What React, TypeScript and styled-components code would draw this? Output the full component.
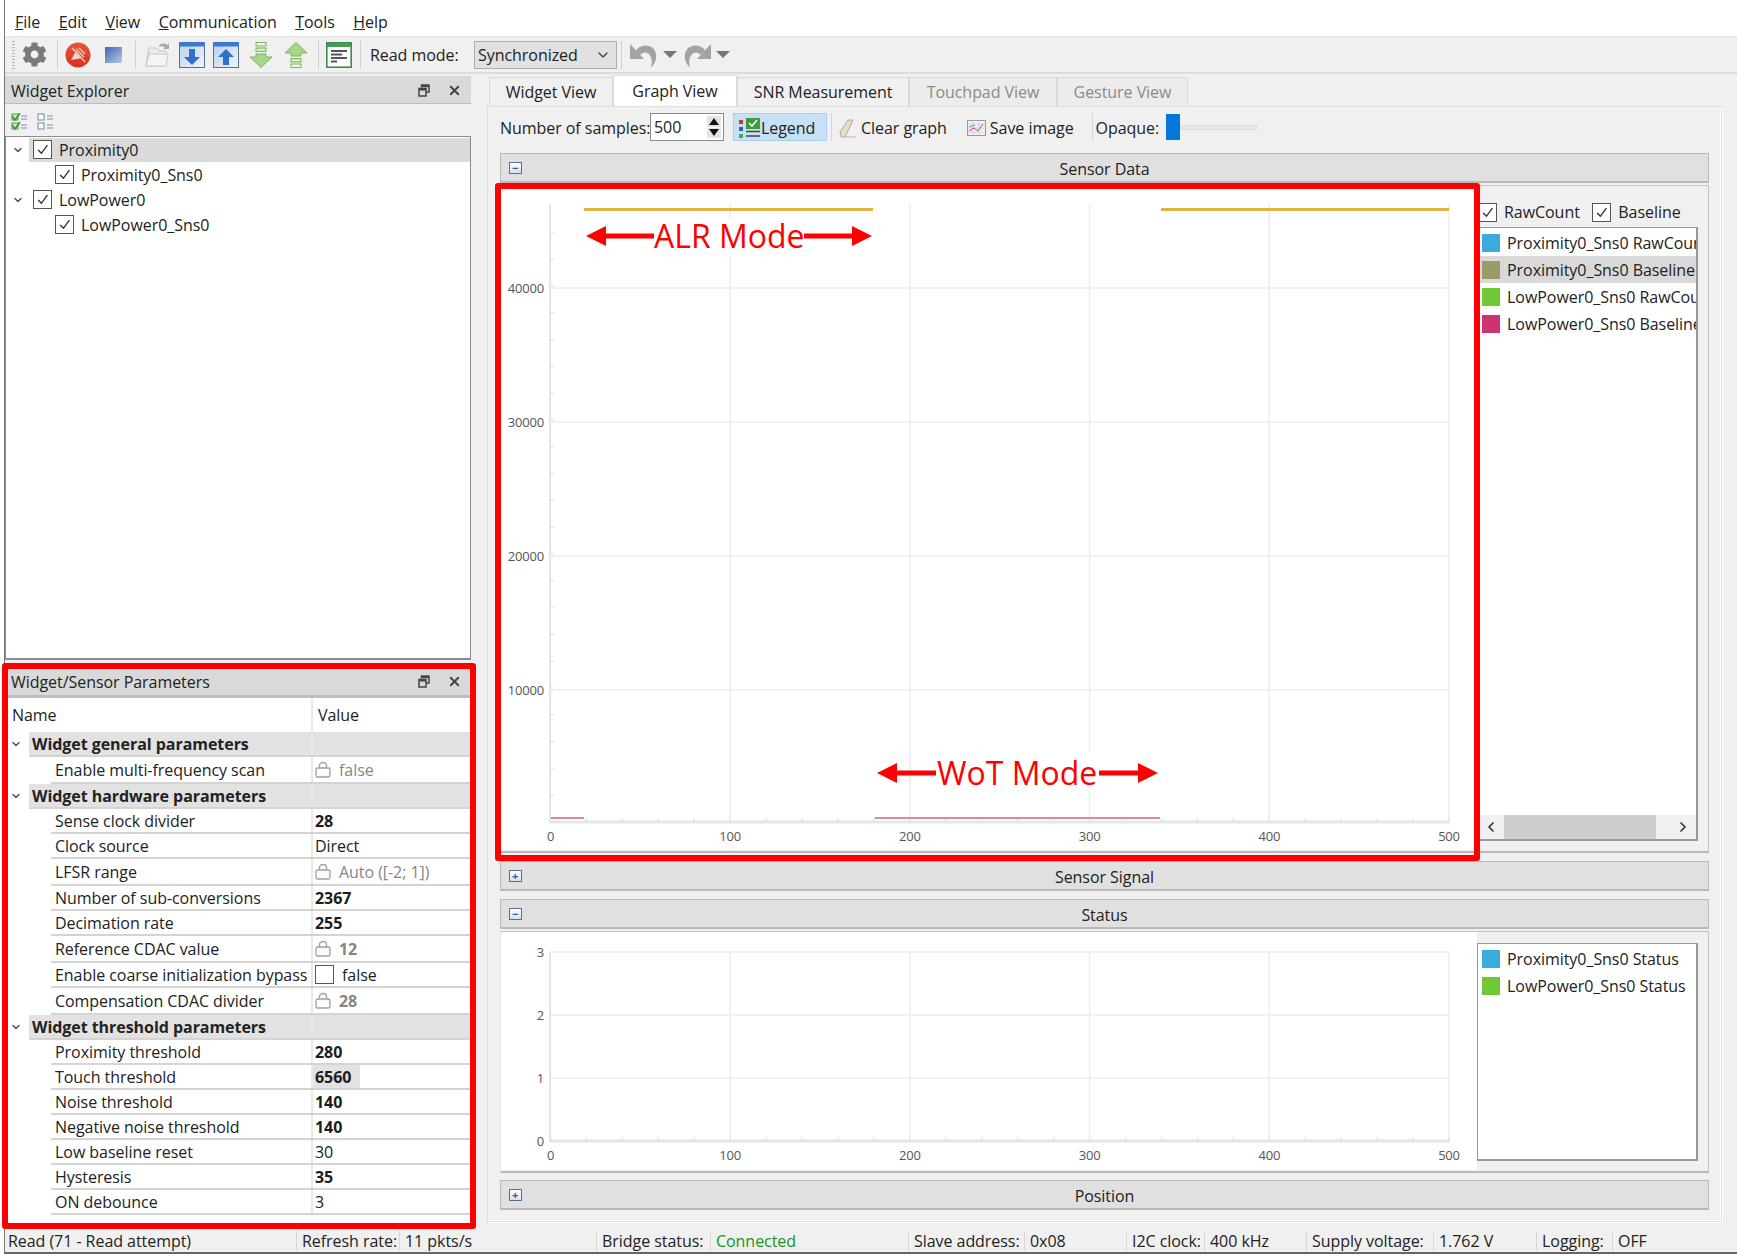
import React from 'react';
import styled, { createGlobalStyle } from 'styled-components';
import { ChevronDown, ChevronLeft, ChevronRight, X } from 'lucide-react';
import { FaCog } from 'react-icons/fa';

const Global = createGlobalStyle`
  html, body { margin: 0; padding: 0; background: #fff; }
  body { font-family: "Open Sans", "Noto Sans", "Liberation Sans", sans-serif; font-size: 16px; letter-spacing: -0.05px; color: #222; }
  * { box-sizing: border-box; }
`;

const Page = styled.div`
  position: relative;
  width: 1737px;
  height: 1256px;
  padding-left: 4px;
  overflow: hidden;
  background: #fff;
`;
const Win = styled.div`
  height: 1254px;
  border-left: 1px solid #777;
  border-bottom: 2px solid #666;
  background: #f0f0f0;
  display: flex;
  flex-direction: column;
`;
const MenuBar = styled.div`
  height: 36px;
  background: #fff;
  display: flex;
  align-items: flex-end;
  gap: 18.5px;
  padding: 0 0 3px 10px;
  line-height: 22px;
`;
const MenuItem = styled.span`
  &::first-letter { text-decoration: underline; }
`;
const ToolBar = styled.div`
  height: 38px;
  border-top: 1px solid #e6e6e6;
  border-bottom: 2px solid #dcdcdc;
  display: flex;
  align-items: center;
`;
const Slot = styled.div<{ $w: number; $ml: number }>`
  width: ${p => p.$w}px;
  margin-left: ${p => p.$ml}px;
  height: 26px;
  flex: none;
  display: flex;
  align-items: center;
  justify-content: center;
  svg { display: block; }
`;
const ToolSep = styled.div<{ $ml: number }>`
  width: 1px;
  height: 28px;
  background: #cfcfcf;
  flex: none;
  margin-left: ${p => p.$ml}px;
`;
const Grip = styled.div`
  width: 3px;
  height: 28px;
  margin-left: 7px;
  flex: none;
  background: repeating-linear-gradient(#b5b5b5 0 1px, transparent 1px 3px);
`;
const ToolLabel = styled.span`
  margin-left: 9px;
  width: 104px;
  flex: none;
`;
const Combo = styled.div`
  width: 143px;
  height: 28px;
  flex: none;
  background: #e1e1e1;
  border: 1px solid #adadad;
  display: flex;
  align-items: center;
  justify-content: space-between;
  padding: 0 5px 0 3px;
`;
const Body = styled.div`
  flex: 1;
  display: flex;
  min-height: 0;
`;
const LeftCol = styled.div`
  width: 466px;
  flex: none;
  padding-top: 2px;
  display: flex;
  flex-direction: column;
`;
const DockTitle = styled.div<{ $shift: number }>`
  height: 28px;
  background: #d9d9d9;
  border-bottom: 1px solid #bdbdbd;
  display: flex;
  align-items: center;
  padding: ${p => p.$shift}px 2px 0 6px;
  flex: none;
`;
const DockName = styled.span`
  flex: 1;
`;
const DockBtn = styled.span`
  width: 30px;
  display: flex;
  justify-content: center;
  align-items: center;
`;
const ExplorerTools = styled.div`
  height: 32px;
  display: flex;
  align-items: center;
  gap: 8px;
  padding: 2px 0 0 6px;
  flex: none;
`;
const TreeBox = styled.div`
  height: 524px;
  flex: none;
  border: 1px solid #8c8c8c;
  border-bottom-width: 2px;
  background: #fff;
`;
const TreeRow = styled.div`
  height: 25px;
  display: flex;
  align-items: center;
`;
const TreeChevron = styled.span`
  width: 23px;
  flex: none;
  display: flex;
  justify-content: center;
  color: #555;
`;
const TreeBody = styled.div<{ $depth: number; $sel?: boolean }>`
  flex: 1;
  height: 24px;
  display: flex;
  align-items: center;
  gap: 7px;
  padding-left: ${p => (p.$depth ? 26 : 4)}px;
  background: ${p => (p.$sel ? '#dadada' : 'transparent')};
`;
const Box = styled.span<{ $size?: number }>`
  width: ${p => p.$size ?? 19}px;
  height: ${p => p.$size ?? 19}px;
  flex: none;
  border: 1.5px solid #555;
  background: #fff;
  display: inline-flex;
  align-items: center;
  justify-content: center;
`;
const ParamTable = styled.div`
  margin-top: 8px;
  display: flex;
  flex-direction: column;
`;
const ParamBody = styled.div`
  background: #fff;
  height: 532px;
`;
const ParamHead = styled.div`
  height: 36px;
  border-top: 2px solid #bdbdbd;
  display: flex;
  align-items: center;
  > span:first-child { width: 306px; padding-left: 7px; }
  > span:last-child { padding-left: 5px; border-left: 2px solid #e8e8e8; height: 100%; display: flex; align-items: center; }
`;
const ParamLine = styled.div<{ $h: number; $group?: boolean }>`
  height: ${p => p.$h}px;
  display: flex;
  padding-left: ${p => (p.$group ? 24 : 46)}px;
  position: relative;
`;
const ParamInner = styled.div<{ $group?: boolean }>`
  flex: 1;
  display: flex;
  margin-right: 1px;
  border-bottom: 2px solid #d4d4d4;
  background: ${p => (p.$group ? '#e2e2e2' : '#fff')};
`;
const GroupChev = styled.span`
  position: absolute;
  left: 5px;
  top: 6px;
  color: #555;
  display: flex;
`;
const ParamName = styled.div<{ $group?: boolean }>`
  width: ${p => (p.$group ? 282 : 260)}px;
  flex: none;
  padding-left: ${p => (p.$group ? 3 : 4)}px;
  font-weight: ${p => (p.$group ? 700 : 400)};
  display: flex;
  align-items: center;
  white-space: nowrap;
`;
const ParamVal = styled.div`
  flex: 1;
  border-left: 2px solid #e8e8e8;
  display: flex;
  align-items: center;
`;
const ValText = styled.span<{ $bold?: boolean; $dim?: boolean; $hi?: boolean }>`
  height: 100%;
  display: inline-flex;
  align-items: center;
  gap: 8px;
  padding: 0 ${p => (p.$hi ? 2 : 4)}px 0 2px;
  min-width: ${p => (p.$hi ? 47 : 0)}px;
  font-weight: ${p => (p.$bold ? 700 : 400)};
  color: ${p => (p.$dim ? '#858585' : '#1c1c1c')};
  background: ${p => (p.$hi ? '#e2e2e2' : 'transparent')};
  svg { flex: none; }
`;
const MainCol = styled.div`
  width: 1235px;
  margin-left: 16px;
  flex: none;
  display: flex;
  flex-direction: column;
`;
const Tabs = styled.div`
  height: 32px;
  display: flex;
  align-items: flex-end;
  padding-left: 2px;
  flex: none;
`;
const Tab = styled.div<{ $w: number; $active?: boolean; $off?: boolean }>`
  width: ${p => p.$w}px;
  height: ${p => (p.$active ? 31 : 29)}px;
  background: ${p => (p.$active ? '#fff' : p.$off ? '#ececec' : '#f0f0f0')};
  border: 1px solid #dadada;
  border-bottom: none;
  display: flex;
  align-items: center;
  justify-content: center;
  color: ${p => (p.$off ? '#8a8a8a' : '#222')};
`;
const Pane = styled.div`
  height: 1116px;
  flex: none;
  background: #f0f0f0;
  border: 1px solid #dedede;
  box-shadow: inset -1px -1px 0 #fff, 1px 1px 0 #fff;
  padding: 6px 12px 0 12px;
  display: flex;
  flex-direction: column;
`;
const PaneTools = styled.div`
  height: 28px;
  display: flex;
  align-items: center;
  flex: none;
`;
const SamplesLabel = styled.span`
  width: 150px;
  flex: none;
  white-space: nowrap;
  padding-top: 1px;
`;
const Spin = styled.div`
  width: 74px;
  height: 28px;
  flex: none;
  border: 1px solid #8a8a8a;
  background: #fff;
  display: flex;
  align-items: center;
  justify-content: space-between;
  padding: 2px 2px 2px 3px;
`;
const SpinBtns = styled.div`
  width: 14px;
  height: 100%;
  display: flex;
  flex-direction: column;
  gap: 1px;
`;
const SpinBtn = styled.span`
  flex: 1;
  background: #e4e4e4;
  display: flex;
  align-items: center;
  justify-content: center;
`;
const LegendBtn = styled.div`
  width: 94px;
  height: 28px;
  margin-left: 9px;
  flex: none;
  background: #c6e0f6;
  border: 1px solid #a6cff2;
  display: flex;
  align-items: center;
  padding: 2px 0 0 5px;
  gap: 0;
`;
const PaneSep = styled.div<{ $ml: number }>`
  width: 1px;
  height: 28px;
  background: #d6d6d6;
  margin-left: ${p => p.$ml}px;
  flex: none;
`;
const PaneAction = styled.span<{ $ml: number }>`
  margin-left: ${p => p.$ml}px;
  display: flex;
  align-items: center;
  gap: 4px;
  flex: none;
  white-space: nowrap;
  padding-top: 1px;
`;
const Handle = styled.div`
  width: 14px;
  height: 26px;
  margin-left: 7px;
  background: #0078d7;
  flex: none;
`;
const Track = styled.div`
  width: 77px;
  height: 5px;
  background: #e3e7e5;
  border: 1px solid #dcdcdc;
  flex: none;
`;
const GroupHead = styled.div<{ $mt: number }>`
  height: 30px;
  margin-top: ${p => p.$mt}px;
  flex: none;
  background: #e0e0e0;
  border: 1px solid #b9b9b9;
  border-bottom-width: 2px;
  display: grid;
  grid-template-columns: 30px 1fr 30px;
  align-items: center;
  justify-items: center;
  > span:last-child { padding-top: 2px; }
`;
const Expander = styled.span`
  width: 13px;
  height: 12px;
  border: 1px solid #54708f;
  background: linear-gradient(#fff, #d6dfea);
  color: #1f5fa8;
  font-size: 11px;
  line-height: 9px;
  font-weight: 700;
  text-align: center;
  margin-left: -2px;
`;
const GroupPanel = styled.div<{ $h: number }>`
  height: ${p => p.$h}px;
  margin-top: 2px;
  flex: none;
  display: flex;
  border: 1px solid #c4c4c4;
  border-left-color: #e4e4e4;
  border-bottom: 2px solid #b8b8b8;
  background: #f0f0f0;
`;
const ChartSvg = styled.svg`
  display: block;
  flex: none;
  background: #fff;
  font-family: "Open Sans", "Noto Sans", sans-serif;
  letter-spacing: -0.2px;
`;
const LegendCol = styled.div<{ $top: number }>`
  flex: 1;
  min-width: 0;
  display: flex;
  flex-direction: column;
  padding: ${p => p.$top}px 10px 10px 0;
`;
const LegendChecks = styled.div`
  height: 28px;
  display: flex;
  align-items: center;
  flex: none;
  padding: 0 0 2px 1px;
`;
const LegendCheckText = styled.span<{ $w: number }>`
  width: ${p => p.$w}px;
  padding-left: 7px;
`;
const LegendList = styled.div`
  flex: 1;
  min-height: 0;
  border: 1px solid #999;
  border-bottom-width: 2px;
  border-right-width: 2px;
  background: #fff;
  display: flex;
  flex-direction: column;
  overflow: hidden;
`;
const LegendRows = styled.div`
  flex: 1;
  padding-top: 1px;
`;
const LegendRow = styled.div<{ $sel?: boolean }>`
  height: 27px;
  display: flex;
  align-items: center;
  gap: 7px;
  padding-left: 4px;
  white-space: nowrap;
  overflow: hidden;
  background: ${p => (p.$sel ? '#d9d9d9' : 'transparent')};
`;
const Swatch = styled.span<{ $c: string }>`
  width: 18px;
  height: 18px;
  flex: none;
  background: ${p => p.$c};
`;
const HScroll = styled.div`
  height: 24px;
  flex: none;
  background: #f0f0f0;
  display: flex;
  align-items: center;
  color: #333;
`;
const HArrow = styled.span`
  width: 26px;
  flex: none;
  display: flex;
  justify-content: center;
`;
const HThumb = styled.div`
  width: 152px;
  height: 100%;
  background: #cdcdcd;
  flex: none;
`;
const HFill = styled.div`
  flex: 1;
`;
const StatusBar = styled.div`
  height: 24px;
  flex: none;
  display: flex;
  align-items: center;
  font-size: 16px;
  padding-top: 1px;
`;
const StatusCell = styled.div<{ $w: number; $green?: boolean; $first?: boolean }>`
  width: ${p => p.$w}px;
  height: 20px;
  flex: none;
  border-left: ${p => (p.$first ? 'none' : '1px solid #d6d6d6')};
  padding-left: ${p => (p.$first ? 3 : 5)}px;
  display: flex;
  align-items: center;
  white-space: nowrap;
  color: ${p => (p.$green ? '#17941b' : '#222')};
`;
const RedFrame = styled.div<{ $x: number; $y: number; $w: number; $h: number }>`
  position: absolute;
  left: ${p => p.$x}px;
  top: ${p => p.$y}px;
  width: ${p => p.$w}px;
  height: ${p => p.$h}px;
  border: 6px solid #ff0000;
  border-radius: 3px;
  pointer-events: none;
`;

const Tick = () => (
  <svg width="13" height="13" viewBox="0 0 12 12" fill="none" stroke="#333" strokeWidth="1.3"><path d="M2 6.5 L5 9.5 L10.5 2" /></svg>
);
const Check = () => <Box><Tick /></Box>;
const Lock = () => (
  <svg width="16" height="17" viewBox="0 0 16 17" fill="#fbfbfb" stroke="#a0a0a0" strokeWidth="1.3">
    <path d="M4.5 7 V4.5 C4.5 0.5 11.5 0.5 11.5 4.5 V7" fill="none" />
    <rect x="1" y="7" width="14" height="9" rx="1.5" />
  </svg>
);
const Restore = () => (
  <svg width="12" height="13" viewBox="0 0 12 13" fill="none" stroke="#444" strokeWidth="1.5">
    <path d="M3.5 3.5 V1 H11 V8 H8" />
    <path d="M3.5 2.2 H11" strokeWidth="2" />
    <rect x="1" y="4.5" width="7" height="7.5" />
    <path d="M1 5.5 H8" strokeWidth="2" />
  </svg>
);
const Close = () => <X size={15} strokeWidth={3} color="#444" />;

const Stop = () => (
  <svg width="26" height="26" viewBox="0 0 26 26">
    <defs><linearGradient id="st" x1="0" y1="0" x2="0" y2="1"><stop offset="0" stopColor="#e8553c" /><stop offset="1" stopColor="#d7301c" /></linearGradient></defs>
    <circle cx="13" cy="13" r="12.5" fill="url(#st)" />
    <path d="M6 18 L11 9 L17 16 Z" fill="#f9d9d0" />
    <path d="M11 7 L19 15 M14 6 L20 12 M7 6 L20 20" stroke="#f6c4b8" strokeWidth="1.5" />
  </svg>
);
const Square = () => (
  <svg width="17" height="16" viewBox="0 0 17 16">
    <defs><linearGradient id="sq" x1="0" y1="0" x2="1" y2="1"><stop offset="0" stopColor="#3d66b4" /><stop offset="1" stopColor="#b7c9e8" /></linearGradient></defs>
    <rect width="17" height="16" fill="url(#sq)" />
  </svg>
);
const Folder = () => (
  <svg width="26" height="26" viewBox="0 0 26 26">
    <path d="M15 4 C17 1 21 1 23 3 L25 1 V7 H19 L21 5 C19 4 17 4 15 5 Z" fill="#a9a9a9" />
    <path d="M5 6 H13 L15 9 H22 V24 H2 Z" fill="#ececec" stroke="#c4c4c4" />
    <path d="M5 12 H24 L22 24 H2 Z" fill="#f4f4f4" stroke="#c9c9c9" />
  </svg>
);
const BlueWin = ({ up }: { up?: boolean }) => (
  <svg width="26" height="26" viewBox="0 0 26 26">
    <defs><linearGradient id={up ? 'bu' : 'bd'} x1="0" y1="0" x2="1" y2="1"><stop offset="0" stopColor="#b6cdee" /><stop offset="1" stopColor="#f1f5fb" /></linearGradient></defs>
    <rect x="0.5" y="0.5" width="25" height="25" fill={`url(#${up ? 'bu' : 'bd'})`} stroke="#5c6f88" />
    <rect x="0" y="0" width="26" height="4.5" fill="#3a7bd0" />
    {up
      ? <path d="M13 7 L21 15 H16 V23 H10 V15 H5 Z" fill="#2f70c8" />
      : <path d="M13 23 L21 15 H16 V7 H10 V15 H5 Z" fill="#2f70c8" />}
  </svg>
);
const GreenArrow = ({ up }: { up?: boolean }) => (
  <svg width="24" height="26" viewBox="0 0 24 26">
    <g transform={up ? 'translate(0 26) scale(1 -1)' : undefined} fill="#a5d886" stroke="#7ab65a" strokeWidth="1">
      <rect x="7" y="0.5" width="10" height="3.5" fill="#eef8e6" />
      <rect x="7" y="6" width="10" height="3.5" fill="#d3edc0" />
      <path d="M7 12 H17 V15 H23 L12 25.5 L1 15 H7 Z" />
    </g>
  </svg>
);
const DocIcon = () => (
  <svg width="26" height="26" viewBox="0 0 26 26">
    <rect x="0.8" y="0.8" width="24.4" height="24.4" fill="#fff" stroke="#3d8a4d" strokeWidth="1.6" />
    <rect x="1" y="1" width="24" height="4" fill="#4a9a5c" />
    <path d="M5 9 H21 M5 12.5 H16 M5 16 H21 M5 19.5 H11" stroke="#555" strokeWidth="1.8" />
  </svg>
);
const Undo = ({ flip }: { flip?: boolean }) => (
  <svg width="28" height="26" viewBox="0 0 28 26" fill="#a3a3a3">
    <g transform={flip ? 'translate(28 0) scale(-1 1)' : undefined}>
      <path d="M1 2 V17 H15 Z" />
      <path d="M7 8 C13 1 25 2 27 12 C28 18 25 23 22 25.5 C24 18 22 11 16 10.5 C14 10.5 12 12 11 13 Z" />
    </g>
  </svg>
);
const DropTri = () => (
  <svg width="14" height="7" viewBox="0 0 14 7"><path d="M0 0 H14 L7 7 Z" fill="#777" /></svg>
);
const CheckAll = ({ on }: { on?: boolean }) => (
  <svg width="18" height="17" viewBox="0 0 18 17" fill="none">
    {[0, 9].map(y => (
      <g key={y} transform={`translate(0 ${y})`}>
        <rect x="1" y="1" width="6" height="6" fill={on ? '#cfe8c0' : '#fff'} stroke={on ? '#5c9b45' : '#6d88a8'} />
        {on && <path d="M1 3 L4 7 L9 0" stroke="#2c9a2c" strokeWidth="1.6" />}
        <path d="M10 3 H16 M10 6 H16" stroke="#7a8ea8" />
      </g>
    ))}
  </svg>
);
const LegendIcon = () => (
  <svg width="22" height="22" viewBox="0 0 22 22">
    <rect x="0" y="3" width="4" height="4" fill="#d8342c" />
    <rect x="0" y="10" width="4" height="4" fill="#2c62c4" />
    <rect x="0" y="17" width="4" height="4" fill="#3bb23b" />
    <rect x="7" y="1" width="14" height="11" fill="#3f9a3f" />
    <path d="M10 6 L13 9 L18 3" stroke="#fff" strokeWidth="1.6" fill="none" />
    <path d="M7 14.5 H21 M7 19 H21" stroke="#444" strokeWidth="1.5" />
  </svg>
);
const Eraser = () => (
  <svg width="18" height="20" viewBox="0 0 18 20">
    <path d="M1 14 L9 2 H14 L6 19 H2 Z" fill="#e6dccb" stroke="#b5a88e" />
    <path d="M6 19 H17" stroke="#b8b8b8" />
  </svg>
);
const SaveImg = () => (
  <svg width="19" height="18" viewBox="0 0 19 18">
    <rect x="0.5" y="1.5" width="18" height="15" fill="#f1f1f1" stroke="#9b9b9b" />
    <path d="M1 5 H18 M1 9 H18 M1 13 H18 M6 2 V16 M12 2 V16" stroke="#cfd7df" />
    <path d="M2 12 L7 9 L11 12 L16 5" stroke="#c4468c" fill="none" />
    <path d="M2 8 L8 6" stroke="#4c9ad0" fill="none" />
  </svg>
);
const SpinTri = ({ up }: { up?: boolean }) => (
  <svg width="10" height="7" viewBox="0 0 10 7"><path d={up ? 'M0 7 H10 L5 0 Z' : 'M0 0 H10 L5 7 Z'} fill="#111" /></svg>
);

const XT = [0, 100, 200, 300, 400, 500];
const xOf = (v: number) => 550.5 + v * 1.797;

const XAxis = ({ top, axis, label }: { top: number; axis: number; label: number }) => (
  <g>
    {XT.map(v => (
      <line key={v} x1={xOf(v)} x2={xOf(v)} y1={top} y2={axis} stroke="#ececec" strokeWidth="1.5" />
    ))}
    <line x1={549} x2={1450} y1={axis} y2={axis} stroke="#e6e6e6" strokeWidth="3" />
    <line x1={550} x2={550} y1={top} y2={axis} stroke="#e6e6e6" strokeWidth="2" />
    {Array.from({ length: 26 }, (_, i) => (
      <line key={i} x1={xOf(i * 20)} x2={xOf(i * 20)} y1={axis - 4} y2={axis} stroke="#dedede" />
    ))}
    {XT.map(v => (
      <text key={v} x={xOf(v)} y={label} textAnchor="middle" fontSize="13" fill="#555">{v}</text>
    ))}
  </g>
);

const Arrow = ({ from, to, y }: { from: number; to: number; y: number }) => {
  const dir = to > from ? 1 : -1;
  return (
    <g fill="#ff0000" stroke="none">
      <rect x={Math.min(from, to - dir * 18)} y={y - 2.5} width={Math.abs(to - dir * 18 - from)} height="5" />
      <polygon points={`${to},${y} ${to - dir * 20},${y - 10} ${to - dir * 20},${y + 10}`} />
    </g>
  );
};

const SensorChart = () => (
  <ChartSvg width={976} height={664} viewBox="501 186 976 664">
    {[288, 422, 556, 690].map(y => (
      <line key={y} x1={550} x2={1449} y1={y} y2={y} stroke="#ececec" strokeWidth="1.5" />
    ))}
    <XAxis top={204} axis={822} label={841} />
    {[288, 422, 556, 690].map((y, i) => (
      <text key={y} x={544} y={y + 5} textAnchor="end" fontSize="13" fill="#555">{40000 - i * 10000}</text>
    ))}
    {Array.from({ length: 23 }, (_, i) => (
      <line key={i} x1={550} x2={554} y1={822 - i * 26.8} y2={822 - i * 26.8} stroke="#dedede" />
    ))}
    <line x1={584} x2={873} y1={209.5} y2={209.5} stroke="#e3b341" strokeWidth="3" />
    <line x1={1161} x2={1449} y1={209.5} y2={209.5} stroke="#e3b341" strokeWidth="3" />
    <line x1={551} x2={584} y1={818} y2={818} stroke="#d78a9f" strokeWidth="2" />
    <line x1={875} x2={1160} y1={818} y2={818} stroke="#d78a9f" strokeWidth="2" />
    <rect x={654} y={218} width={150} height={38} fill="#fff" />
    <rect x={936} y={752} width={164} height={38} fill="#fff" />
    <Arrow from={654} to={586} y={236} />
    <Arrow from={804} to={872} y={236} />
    <text x={654} y={248} fontSize="32" fill="#ff0000" letterSpacing="0">ALR Mode</text>
    <Arrow from={936} to={877} y={773} />
    <Arrow from={1099} to={1158} y={773} />
    <text x={937} y={785} fontSize="32" fill="#ff0000" letterSpacing="0">WoT Mode</text>
  </ChartSvg>
);

const StatusChart = () => (
  <ChartSvg width={976} height={238} viewBox="501 932 976 238">
    {[952, 1015, 1078].map(y => (
      <line key={y} x1={550} x2={1449} y1={y} y2={y} stroke="#ececec" strokeWidth="1.5" />
    ))}
    <XAxis top={952} axis={1141} label={1160} />
    {[952, 1015, 1078, 1141].map((y, i) => (
      <text key={y} x={544} y={y + 5} textAnchor="end" fontSize="13" fill="#555">{3 - i}</text>
    ))}
  </ChartSvg>
);

type P = { n: string; v?: React.ReactNode; group?: boolean; h?: number; bold?: boolean; lock?: boolean; hi?: boolean; box?: boolean };
const params: P[] = [
  { n: 'Widget general parameters', group: true },
  { n: 'Enable multi-frequency scan', v: 'false', lock: true, h: 27 },
  { n: 'Widget hardware parameters', group: true },
  { n: 'Sense clock divider', v: '28', bold: true },
  { n: 'Clock source', v: 'Direct' },
  { n: 'LFSR range', v: 'Auto ([-2; 1])', lock: true, h: 27 },
  { n: 'Number of sub-conversions', v: '2367', bold: true },
  { n: 'Decimation rate', v: '255', bold: true },
  { n: 'Reference CDAC value', v: '12', bold: true, lock: true, h: 27 },
  { n: 'Enable coarse initialization bypass', v: 'false', box: true },
  { n: 'Compensation CDAC divider', v: '28', bold: true, lock: true, h: 27 },
  { n: 'Widget threshold parameters', group: true },
  { n: 'Proximity threshold', v: '280', bold: true },
  { n: 'Touch threshold', v: '6560', bold: true, hi: true },
  { n: 'Noise threshold', v: '140', bold: true },
  { n: 'Negative noise threshold', v: '140', bold: true },
  { n: 'Low baseline reset', v: '30' },
  { n: 'Hysteresis', v: '35', bold: true },
  { n: 'ON debounce', v: '3' },
];

const statusCells: { t: string; w: number; green?: boolean }[] = [
  { t: 'Read (71 - Read attempt)', w: 291 },
  { t: 'Refresh rate:', w: 103 },
  { t: '11 pkts/s', w: 197 },
  { t: 'Bridge status:', w: 114 },
  { t: 'Connected', w: 198, green: true },
  { t: 'Slave address:', w: 116 },
  { t: '0x08', w: 102 },
  { t: 'I2C clock:', w: 78 },
  { t: '400 kHz', w: 102 },
  { t: 'Supply voltage:', w: 127 },
  { t: '1.762 V', w: 103 },
  { t: 'Logging:', w: 76 },
  { t: 'OFF', w: 101 },
];

export default function App() {
  return (
    <Page>
      <Global />
      <Win>
        <MenuBar>
          {['File', 'Edit', 'View', 'Communication', 'Tools', 'Help'].map(m => <MenuItem key={m}>{m}</MenuItem>)}
        </MenuBar>
        <ToolBar>
          <Grip />
          <Slot $w={26} $ml={6}><FaCog size={25} color="#7b7b7b" /></Slot>
          <ToolSep $ml={10} />
          <Slot $w={26} $ml={7}><Stop /></Slot>
          <Slot $w={17} $ml={14}><Square /></Slot>
          <ToolSep $ml={13} />
          <Slot $w={26} $ml={8}><Folder /></Slot>
          <Slot $w={26} $ml={9}><BlueWin /></Slot>
          <Slot $w={26} $ml={8}><BlueWin up /></Slot>
          <Slot $w={24} $ml={10}><GreenArrow /></Slot>
          <Slot $w={24} $ml={11}><GreenArrow up /></Slot>
          <ToolSep $ml={10} />
          <Slot $w={26} $ml={7}><DocIcon /></Slot>
          <ToolSep $ml={8} />
          <ToolLabel>Read mode:</ToolLabel>
          <Combo>Synchronized<ChevronDown size={16} color="#444" /></Combo>
          <ToolSep $ml={4} />
          <Slot $w={28} $ml={7}><Undo /></Slot>
          <Slot $w={14} $ml={6}><DropTri /></Slot>
          <Slot $w={28} $ml={7}><Undo flip /></Slot>
          <Slot $w={14} $ml={4}><DropTri /></Slot>
        </ToolBar>
        <Body>
          <LeftCol>
            <DockTitle $shift={2}>
              <DockName>Widget Explorer</DockName>
              <DockBtn><Restore /></DockBtn>
              <DockBtn><Close /></DockBtn>
            </DockTitle>
            <ExplorerTools><CheckAll on /><CheckAll /></ExplorerTools>
            <TreeBox>
              <TreeRow>
                <TreeChevron><ChevronDown size={12} strokeWidth={3} /></TreeChevron>
                <TreeBody $depth={0} $sel><Check />Proximity0</TreeBody>
              </TreeRow>
              <TreeRow>
                <TreeChevron />
                <TreeBody $depth={1}><Check />Proximity0_Sns0</TreeBody>
              </TreeRow>
              <TreeRow>
                <TreeChevron><ChevronDown size={12} strokeWidth={3} /></TreeChevron>
                <TreeBody $depth={0}><Check />LowPower0</TreeBody>
              </TreeRow>
              <TreeRow>
                <TreeChevron />
                <TreeBody $depth={1}><Check />LowPower0_Sns0</TreeBody>
              </TreeRow>
            </TreeBox>
            <ParamTable>
              <DockTitle $shift={0}>
                <DockName>Widget/Sensor Parameters</DockName>
                <DockBtn><Restore /></DockBtn>
                <DockBtn><Close /></DockBtn>
              </DockTitle>
              <ParamBody>
                <ParamHead><span>Name</span><span>Value</span></ParamHead>
                {params.map(p => (
                  <ParamLine key={p.n} $h={p.h ?? 25} $group={p.group}>
                    {p.group && <GroupChev><ChevronDown size={12} strokeWidth={3} /></GroupChev>}
                    <ParamInner $group={p.group}>
                      <ParamName $group={p.group}>{p.n}</ParamName>
                      <ParamVal>
                        {p.v && (
                          <ValText $bold={p.bold} $dim={p.lock} $hi={p.hi}>
                            {p.lock && <Lock />}
                            {p.box && <Box $size={19} />}
                            {p.v}
                          </ValText>
                        )}
                      </ParamVal>
                    </ParamInner>
                  </ParamLine>
                ))}
              </ParamBody>
            </ParamTable>
          </LeftCol>
          <MainCol>
            <Tabs>
              <Tab $w={124}>Widget View</Tab>
              <Tab $w={124} $active>Graph View</Tab>
              <Tab $w={172}>SNR Measurement</Tab>
              <Tab $w={148} $off>Touchpad View</Tab>
              <Tab $w={131} $off>Gesture View</Tab>
            </Tabs>
            <Pane>
              <PaneTools>
                <SamplesLabel>Number of samples:</SamplesLabel>
                <Spin>500<SpinBtns><SpinBtn><SpinTri up /></SpinBtn><SpinBtn><SpinTri /></SpinBtn></SpinBtns></Spin>
                <LegendBtn><LegendIcon />Legend</LegendBtn>
                <PaneSep $ml={4} />
                <PaneAction $ml={7}><Eraser />Clear graph</PaneAction>
                <PaneAction $ml={20}><SaveImg />Save image</PaneAction>
                <PaneSep $ml={18} />
                <PaneAction $ml={3}>Opaque:</PaneAction>
                <Handle />
                <Track />
              </PaneTools>
              <GroupHead $mt={12}><Expander>−</Expander><span>Sensor Data</span></GroupHead>
              <GroupPanel $h={668}>
                <SensorChart />
                <LegendCol $top={13}>
                  <LegendChecks>
                    <Check /><LegendCheckText $w={99}>RawCount</LegendCheckText>
                    <Check /><LegendCheckText $w={90}>Baseline</LegendCheckText>
                  </LegendChecks>
                  <LegendList>
                    <LegendRows>
                      <LegendRow><Swatch $c="#3aabdc" />Proximity0_Sns0 RawCount</LegendRow>
                      <LegendRow $sel><Swatch $c="#9b9b6a" />Proximity0_Sns0 Baseline</LegendRow>
                      <LegendRow><Swatch $c="#70c934" />LowPower0_Sns0 RawCount</LegendRow>
                      <LegendRow><Swatch $c="#cc3370" />LowPower0_Sns0 Baseline</LegendRow>
                    </LegendRows>
                    <HScroll>
                      <HArrow><ChevronLeft size={16} strokeWidth={2.5} /></HArrow>
                      <HThumb />
                      <HFill />
                      <HArrow><ChevronRight size={16} strokeWidth={2.5} /></HArrow>
                    </HScroll>
                  </LegendList>
                </LegendCol>
              </GroupPanel>
              <GroupHead $mt={8}><Expander>+</Expander><span>Sensor Signal</span></GroupHead>
              <GroupHead $mt={8}><Expander>−</Expander><span>Status</span></GroupHead>
              <GroupPanel $h={242}>
                <StatusChart />
                <LegendCol $top={11}>
                  <LegendList>
                    <LegendRows>
                      <LegendRow><Swatch $c="#3aabdc" />Proximity0_Sns0 Status</LegendRow>
                      <LegendRow><Swatch $c="#70c934" />LowPower0_Sns0 Status</LegendRow>
                    </LegendRows>
                  </LegendList>
                </LegendCol>
              </GroupPanel>
              <GroupHead $mt={7}><Expander>+</Expander><span>Position</span></GroupHead>
            </Pane>
          </MainCol>
        </Body>
        <StatusBar>
          {statusCells.map((c, i) => (
            <StatusCell key={c.t} $w={c.w} $green={c.green} $first={i === 0}>{c.t}</StatusCell>
          ))}
        </StatusBar>
      </Win>
      <RedFrame $x={2} $y={663} $w={474} $h={566} />
      <RedFrame $x={495} $y={183} $w={985} $h={678} />
    </Page>
  );
}
